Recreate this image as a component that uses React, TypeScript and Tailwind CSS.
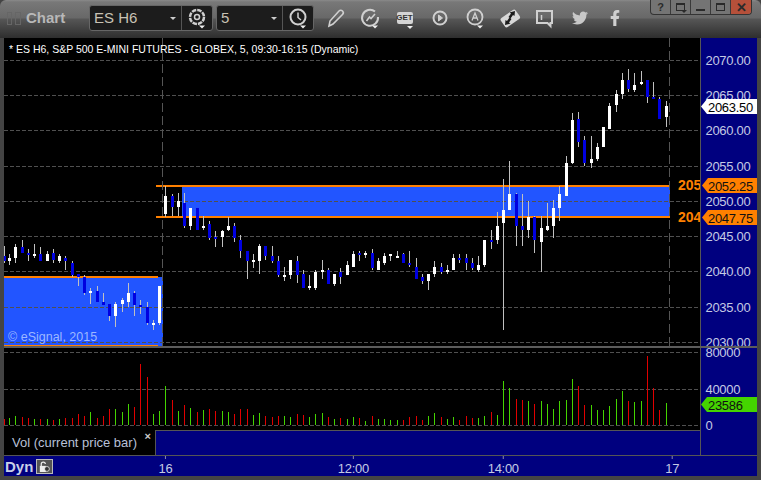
import { FaFacebookF, FaTwitter } from "react-icons/fa";

type Candle = [x: number, high: number, low: number, top: number, bottom: number, up: 0 | 1];
type VolumeBar = [x: number, top: number, up: 0 | 1];

// pixel positions read off the chart, page coordinates
const candles: Candle[] = [
  [4, 246, 263, 256, 261, 0], [9, 254, 265, 258, 261, 1], [15, 244, 263, 247, 258, 1], [22, 240, 253, 247, 253, 0],
  [28, 249, 261, 253, 255, 0], [34, 244, 258, 254, 256, 1], [40, 247, 261, 254, 261, 0], [47, 251, 261, 254, 261, 1],
  [53, 249, 263, 253, 260, 0], [59, 254, 263, 256, 261, 1], [65, 256, 270, 258, 261, 0], [72, 261, 277, 263, 275, 0],
  [78, 274, 286, 274, 277, 0], [84, 275, 295, 277, 293, 0], [90, 288, 304, 291, 293, 1], [97, 286, 302, 291, 302, 0],
  [103, 293, 305, 302, 305, 0], [109, 304, 321, 304, 316, 0], [115, 302, 327, 304, 316, 1], [122, 298, 312, 300, 304, 1],
  [128, 283, 307, 293, 302, 1], [134, 291, 316, 293, 305, 0], [140, 300, 314, 305, 307, 0], [147, 302, 325, 307, 323, 0],
  [153, 320, 330, 323, 325, 1], [159, 286, 325, 286, 323, 1], [165, 186, 217, 196, 214, 1], [172, 194, 216, 196, 207, 0],
  [178, 193, 216, 201, 207, 1], [184, 193, 228, 203, 226, 0], [190, 208, 230, 208, 226, 1], [197, 208, 230, 208, 230, 0],
  [203, 216, 230, 226, 228, 1], [209, 221, 240, 224, 238, 0], [215, 231, 247, 237, 239, 0], [222, 230, 247, 231, 237, 1],
  [228, 217, 231, 226, 230, 1], [234, 223, 242, 226, 238, 0], [240, 235, 258, 240, 251, 0], [247, 251, 279, 251, 261, 0],
  [253, 254, 268, 260, 262, 1], [259, 244, 274, 246, 261, 1], [265, 246, 260, 246, 256, 0], [272, 246, 263, 256, 261, 0],
  [278, 256, 277, 261, 275, 0], [284, 267, 281, 275, 277, 1], [290, 260, 279, 260, 275, 1], [297, 256, 283, 261, 275, 0],
  [303, 270, 288, 274, 288, 0], [309, 275, 290, 286, 288, 1], [315, 270, 290, 272, 288, 1], [322, 260, 279, 270, 272, 1],
  [328, 268, 284, 270, 284, 0], [334, 274, 286, 274, 284, 1], [340, 268, 284, 272, 277, 0], [347, 261, 275, 265, 275, 1],
  [353, 251, 267, 254, 267, 1], [359, 251, 261, 253, 255, 0], [365, 251, 258, 253, 255, 1], [372, 249, 270, 253, 268, 0],
  [378, 258, 270, 261, 270, 1], [384, 253, 265, 256, 263, 1], [390, 254, 261, 254, 256, 1], [397, 251, 258, 256, 258, 1],
  [403, 253, 263, 254, 263, 0], [409, 251, 267, 263, 265, 0], [416, 258, 279, 267, 279, 0], [422, 274, 284, 277, 281, 0],
  [428, 274, 290, 274, 281, 1], [434, 261, 277, 267, 274, 1], [441, 263, 274, 267, 272, 0], [447, 265, 274, 270, 272, 1],
  [453, 254, 270, 258, 270, 1], [459, 254, 263, 258, 260, 0], [466, 254, 270, 258, 263, 0], [472, 258, 270, 263, 268, 0],
  [478, 256, 272, 265, 270, 1], [484, 240, 267, 240, 265, 1], [491, 230, 249, 240, 242, 0], [497, 212, 244, 226, 240, 1],
  [503, 179, 330, 210, 223, 1], [509, 161, 210, 194, 210, 1], [516, 193, 246, 194, 226, 0], [522, 194, 246, 226, 230, 0],
  [528, 201, 238, 217, 230, 1], [534, 216, 253, 217, 240, 0], [541, 216, 272, 228, 242, 1], [547, 203, 231, 226, 230, 1],
  [553, 200, 238, 208, 226, 1], [559, 186, 221, 194, 208, 1], [566, 156, 196, 163, 196, 1], [572, 113, 164, 120, 163, 1],
  [578, 112, 147, 119, 142, 0], [584, 136, 166, 140, 163, 0], [591, 136, 168, 159, 163, 1], [597, 143, 161, 147, 159, 1],
  [603, 127, 147, 127, 147, 1], [609, 103, 129, 106, 129, 1], [616, 90, 112, 94, 105, 1], [622, 73, 99, 80, 94, 1],
  [628, 69, 92, 80, 89, 0], [634, 73, 92, 85, 90, 1], [641, 71, 85, 82, 84, 1], [647, 80, 103, 80, 97, 0],
  [653, 82, 99, 97, 99, 0], [659, 97, 119, 99, 119, 0], [666, 101, 127, 106, 117, 1],
];

const volume: VolumeBar[] = [
  [4, 419, 0], [9, 418, 1], [15, 416, 1], [22, 417, 0], [28, 418, 0], [34, 419, 1], [40, 419, 0], [47, 419, 1],
  [53, 420, 0], [59, 419, 1], [65, 418, 0], [72, 418, 0], [78, 414, 0], [84, 416, 0], [90, 412, 1], [97, 418, 0],
  [103, 416, 0], [109, 409, 0], [115, 409, 1], [122, 412, 1], [128, 404, 1], [134, 407, 0], [140, 364, 0], [147, 377, 0],
  [153, 414, 1], [159, 411, 1], [165, 386, 1], [172, 400, 0], [178, 411, 1], [184, 405, 0], [190, 408, 1], [197, 412, 0],
  [203, 410, 1], [209, 409, 0], [215, 411, 0], [222, 411, 1], [228, 412, 1], [234, 414, 0], [240, 409, 0], [247, 409, 0],
  [253, 415, 1], [259, 413, 1], [265, 416, 0], [272, 417, 0], [278, 416, 0], [284, 416, 1], [290, 417, 1], [297, 414, 0],
  [303, 415, 0], [309, 417, 1], [315, 414, 1], [322, 413, 1], [328, 417, 0], [334, 419, 1], [340, 418, 0], [347, 419, 1],
  [353, 417, 1], [359, 418, 0], [365, 421, 1], [372, 416, 0], [378, 419, 1], [384, 419, 1], [390, 420, 1], [397, 420, 1],
  [403, 420, 0], [409, 417, 0], [416, 416, 0], [422, 420, 0], [428, 416, 1], [434, 413, 1], [441, 417, 0], [447, 419, 1],
  [453, 417, 1], [459, 420, 0], [466, 416, 0], [472, 418, 0], [478, 418, 1], [484, 416, 1], [491, 412, 0], [497, 415, 1],
  [503, 381, 1], [509, 388, 1], [516, 399, 0], [522, 400, 0], [528, 401, 1], [534, 404, 0], [541, 401, 1], [547, 404, 1],
  [553, 409, 1], [559, 401, 1], [566, 400, 1], [572, 379, 1], [578, 386, 0], [584, 405, 0], [591, 405, 1], [597, 410, 1],
  [603, 410, 1], [609, 406, 1], [616, 399, 1], [622, 391, 1], [628, 401, 0], [634, 402, 1], [641, 401, 1], [647, 356, 0],
  [653, 388, 0], [659, 410, 0], [666, 403, 1],
];

const priceLevels = [
  [2070, 60], [2065, 95], [2060, 130], [2055, 166], [2050, 201], [2045, 236], [2040, 271], [2035, 307], [2030, 342],
];

function Caret() {
  return <path d="M14 19.500h6l-3 3z" fill="#eee" stroke="none" />;
}

function IconBox({ children }: { children: React.ReactNode }) {
  return (
    <svg viewBox="0 0 24 24" className="h-6 w-6" fill="none" stroke="#d0d0d0" strokeWidth="2">
      {children}
    </svg>
  );
}

function ToolButton({ children }: { children: React.ReactNode }) {
  return <span className="flex h-full w-[35px] items-center justify-center">{children}</span>;
}

function TitleBar() {
  return (
    <header className="flex h-[38px] shrink-0 items-center rounded-t-[6px] bg-[linear-gradient(#8a8a8a_0,#787878_2px,#686868_18px,#565656_19px,#2e2e2e_38px)] pb-[2px]">
      <span className="ml-[7px] h-[13px] w-[5px] border border-[#666]" />
      <span className="ml-[3px] h-[13px] w-[6px] border border-[#666]" />
      <span className="ml-[5px] w-[63px] text-[15px] font-bold text-[#b8b8b8]">Chart</span>

      <div className="flex h-[26px] w-[124px] items-center rounded-[3px] border border-[#666] bg-[#1c1c1c]">
        <span className="ml-[4px] flex-1 text-[15px] text-[#c8c2b4]">ES H6</span>
        <span className="mr-[5px] h-0 w-0 border-x-[3px] border-t-[3px] border-x-transparent border-t-[#ccc]" />
        <span className="flex h-full w-[31px] items-center justify-center border-l border-[#555]">
          <IconBox>
            <circle cx="12" cy="11" r="7" strokeWidth="2.500" strokeDasharray="4.500 1" />
            <circle cx="12" cy="11" r="2.500" strokeWidth="1.500" />
            <Caret />
          </IconBox>
        </span>
      </div>

      <div className="ml-[3px] flex h-[26px] w-[98px] items-center rounded-[3px] border border-[#666] bg-[#1c1c1c]">
        <span className="ml-[4px] flex-1 text-[15px] text-[#c8c2b4]">5</span>
        <span className="mr-[5px] h-0 w-0 border-x-[3px] border-t-[3px] border-x-transparent border-t-[#ccc]" />
        <span className="flex h-full w-[31px] items-center justify-center border-l border-[#555]">
          <IconBox>
            <circle cx="12" cy="11" r="7.500" />
            <path d="M12 6.500v5l3 2.500" strokeWidth="1.500" />
            <Caret />
          </IconBox>
        </span>
      </div>

      <div className="ml-[3px] flex h-full items-center">
        <ToolButton>
          <IconBox>
            <path d="M6 20l1-5L16 5c1-1 2.500-1 3.500 0s1 2.500 0 3.500L10 18z" strokeWidth="1.600" />
          </IconBox>
        </ToolButton>
        <ToolButton>
          <IconBox>
            <path d="M17 5.500a8 8 0 1 0 3 5.500" />
            <path d="M8.500 15l3-4 1.500 1.500L17 8" strokeWidth="1.600" />
            <Caret />
          </IconBox>
        </ToolButton>
        <ToolButton>
          <span className="relative flex h-[12px] w-[16px] items-center justify-center rounded-[2px] bg-[#d4d4d4] text-[8px] font-bold leading-none text-[#333]">
            GET
            <span className="absolute -bottom-[5px] right-0 h-0 w-0 border-x-[3px] border-t-[3px] border-x-transparent border-t-[#eee]" />
          </span>
        </ToolButton>
        <ToolButton>
          <IconBox>
            <circle cx="12" cy="12" r="6.500" />
            <path d="M10.500 9l4 3-4 3z" fill="#d0d0d0" strokeWidth="1" />
          </IconBox>
        </ToolButton>
        <ToolButton>
          <IconBox>
            <circle cx="12" cy="11" r="7.500" strokeWidth="1.800" />
            <path d="M9 14.500L12 7l3 7.500M10 12h4" strokeWidth="1.300" />
            <Caret />
          </IconBox>
        </ToolButton>
        <ToolButton>
          <svg viewBox="0 0 24 24" className="h-6 w-6">
            <rect x="3" y="7" width="18" height="11" rx="2" fill="#d8d8d8" transform="rotate(-35 12 12)" />
            <path d="M17 5l-.500 5-1.500-1-2.500 3.500-2-1.500L13 7.500 11.500 6.500z" fill="#1c1c1c" />
            <path d="M7 19l.500-5 1.500 1 2.500-3.500 2 1.500L11 16.500l1.500 1z" fill="#1c1c1c" />
          </svg>
        </ToolButton>
        <ToolButton>
          <IconBox>
            <path d="M4 5h15v12h-1.500v3l-3-3H4z" strokeWidth="2" />
            <path d="M8.500 9v5" strokeWidth="1.500" />
          </IconBox>
        </ToolButton>
        <ToolButton>
          <FaTwitter className="text-[16px] text-[#c8c8c8]" />
        </ToolButton>
        <ToolButton>
          <FaFacebookF className="text-[16px] text-[#d0d0d0]" />
        </ToolButton>
      </div>

      <WindowButtons />
    </header>
  );
}

function WindowButtons() {
  return (
    <div className="ml-auto mr-[9px] flex h-[15px] self-start overflow-hidden rounded-b-[4px] border border-t-0 border-[#333] bg-[#747474] text-[#2a2a2a]">
      <span className="flex w-[20px] items-center justify-center border-r border-[#3a3a3a] text-[11px] font-bold leading-none">?</span>
      <span className="relative flex w-[20px] items-center justify-center border-r border-[#3a3a3a]">
        <span className="h-[8px] w-[9px] border border-t-2 border-[#2a2a2a]" />
        <span className="absolute bottom-[1px] right-[3px] h-0 w-0 border-x-[3px] border-t-[3px] border-x-transparent border-t-[#2a2a2a]" />
      </span>
      <span className="flex w-[20px] items-end justify-center border-r border-[#3a3a3a] pb-[3px]">
        <span className="h-[2px] w-[9px] bg-[#2a2a2a]" />
      </span>
      <span className="flex w-[20px] items-center justify-center border-r border-[#3a3a3a]">
        <span className="h-[8px] w-[9px] border border-t-2 border-[#2a2a2a]" />
      </span>
      <span className="flex w-[20px] items-center justify-center bg-[#b5503a] text-[13px] font-bold leading-none">✕</span>
    </div>
  );
}

function PricePane() {
  return (
    <div className="relative h-[308px] w-[696px] overflow-hidden bg-black">
      <svg viewBox="4 38 696 308" className="block h-full w-full" shapeRendering="crispEdges">
        <rect x="4" y="277" width="159" height="69" fill="#2255ff" />
        <rect x="182" y="187" width="488" height="29" fill="#2255ff" />
        <rect x="4" y="276" width="154" height="2" fill="#ff8000" />
        <rect x="4" y="345" width="154" height="1" fill="#ff8000" />
        <rect x="156" y="185" width="514" height="2" fill="#ff8000" />
        <rect x="156" y="216" width="514" height="2" fill="#ff8000" />

        {priceLevels.map(([price, y]) => (
          <line key={price} x1="4" x2="700" y1={y + 0.5} y2={y + 0.5} stroke="#505050" strokeDasharray="4 2" />
        ))}
        <line x1="162.500" x2="162.500" y1="38" y2="346" stroke="#555" strokeDasharray="9 4" />
        <line x1="669.500" x2="669.500" y1="38" y2="346" stroke="#555" strokeDasharray="9 4" />

        {candles.map(([x, high, low, top, bottom, up]) => (
          <g key={x}>
            <rect x={x} y={high} width="1" height={low - high} fill="#c0c0c0" />
            <rect x={x - 1} y={top} width="3" height={bottom - top} fill={up ? "#ffffff" : "#0000e0"} />
          </g>
        ))}

        <text x="678" y="190" className="fill-[#ff8000] text-[14px] font-bold">205</text>
        <text x="678" y="222" className="fill-[#ff8000] text-[14px] font-bold">204</text>
      </svg>
      <p className="absolute left-[5px] top-[5px] text-[10.500px] leading-3 text-white">
        * ES H6, S&amp;P 500 E-MINI FUTURES - GLOBEX, 5, 09:30-16:15 (Dynamic)
      </p>
      <p className="absolute bottom-[2px] left-[4px] text-[12.500px] leading-[14px] text-[#9db8ff]">© eSignal, 2015</p>
    </div>
  );
}

function PriceAxis() {
  return (
    <div className="h-[308px] w-[57px] border-l border-[#555] bg-[#00007f]">
      <svg viewBox="701 38 56 308" className="block h-full w-full text-[13px] tracking-[-0.3px]">
        {priceLevels.map(([price, y]) => (
          <text key={price} x="705.500" y={y + 5} className="fill-[#c4cae4]">{price}.00</text>
        ))}
        <path d="M701 106.500L707 99H757V114H707z" fill="#fff" />
        <text x="708" y="111.500" className="fill-black">2063.50</text>
        <path d="M702 185.500L708 178H757V193H708z" fill="#ff8000" />
        <text x="708" y="190.500" className="fill-[#111]">2052.25</text>
        <path d="M702 217.500L708 210H757V225H708z" fill="#ff8000" />
        <text x="708" y="222.500" className="fill-[#111]">2047.75</text>
      </svg>
    </div>
  );
}

function VolumePane() {
  return (
    <div className="h-[82px] w-[696px] bg-black">
      <svg viewBox="4 348 696 82" className="block h-full w-full" shapeRendering="crispEdges">
        {[352, 389, 425].map((y) => (
          <line key={y} x1="4" x2="700" y1={y + 0.5} y2={y + 0.5} stroke="#505050" strokeDasharray="4 2" />
        ))}
        {volume.map(([x, top, up]) => (
          <rect key={x} x={x} y={top} width="1" height={425 - top} fill={up ? "#44d400" : "#e00000"} />
        ))}
      </svg>
    </div>
  );
}

function VolumeAxis() {
  return (
    <div className="h-[82px] w-[57px] border-l border-[#555] bg-[#00007f]">
      <svg viewBox="701 348 56 82" className="block h-full w-full text-[13px] tracking-[-0.3px]">
        <text x="705.500" y="357" className="fill-[#c4cae4]">80000</text>
        <text x="705.500" y="394" className="fill-[#c4cae4]">40000</text>
        <text x="705.500" y="430" className="fill-[#c4cae4]">0</text>
        <path d="M701 404.500L707 397H757V412H707z" fill="#44d400" />
        <text x="708" y="409.500" className="fill-[#111]">23586</text>
      </svg>
    </div>
  );
}

function LegendRow() {
  return (
    <div className="flex h-[26px] border-b border-[#555]">
      <div className="relative flex w-[151px] items-center bg-black pl-[8px] text-[13px] text-[#b8c0d8]">
        Vol (current price bar)
        <span className="absolute right-[4px] top-0 text-[11px] font-bold leading-3 text-[#ccc]">×</span>
      </div>
      <div className="w-[545px] border-l border-t border-[#555] bg-[#00007f]" />
      <div className="w-[57px] border-l border-[#555] bg-[#00007f]" />
    </div>
  );
}

function TimeAxis() {
  return (
    <div className="flex h-[20px] items-center bg-[#00007f]">
      <span className="ml-[1px] text-[15px] font-bold leading-none text-[#c8cfe8]">Dyn</span>
      <span className="ml-[3px] flex h-[15px] w-[17px] items-center justify-center border border-[#bbb] bg-[#555]">
        <svg viewBox="0 0 16 16" className="h-[13px] w-[13px]" fill="none" stroke="#eee" strokeWidth="1.500">
          <path d="M4 8V5a2.500 2.500 0 0 1 5 0" />
          <rect x="3" y="8" width="6" height="6" fill="#eee" />
          <circle cx="11" cy="11" r="3" fill="#333" strokeWidth="1" />
        </svg>
      </span>
      <svg viewBox="53 456 704 20" className="ml-auto block h-[20px] w-[704px] text-[13px] tracking-[-0.3px]">
        {[
          [165.5, "16"],
          [353.5, "12:00"],
          [503.5, "14:00"],
          [672.5, "17"],
        ].map(([x, label]) => (
          <g key={label}>
            <line x1={x} x2={x} y1="456" y2="459" stroke="#8a8ab0" />
            <text x={x} y="473" textAnchor="middle" className="fill-[#c4cae4]">{label}</text>
          </g>
        ))}
      </svg>
    </div>
  );
}

export default function App() {
  return (
    <div className="flex h-[480px] w-[761px] flex-col overflow-hidden bg-[#444] font-['Liberation_Sans',Arial,sans-serif]">
      <TitleBar />
      <div className="flex flex-col px-[4px]">
        <div className="flex">
          <PricePane />
          <PriceAxis />
        </div>
        <div className="h-[2px] bg-[#5c5c5c]" />
        <div className="flex">
          <VolumePane />
          <VolumeAxis />
        </div>
        <LegendRow />
        <TimeAxis />
      </div>
    </div>
  );
}
